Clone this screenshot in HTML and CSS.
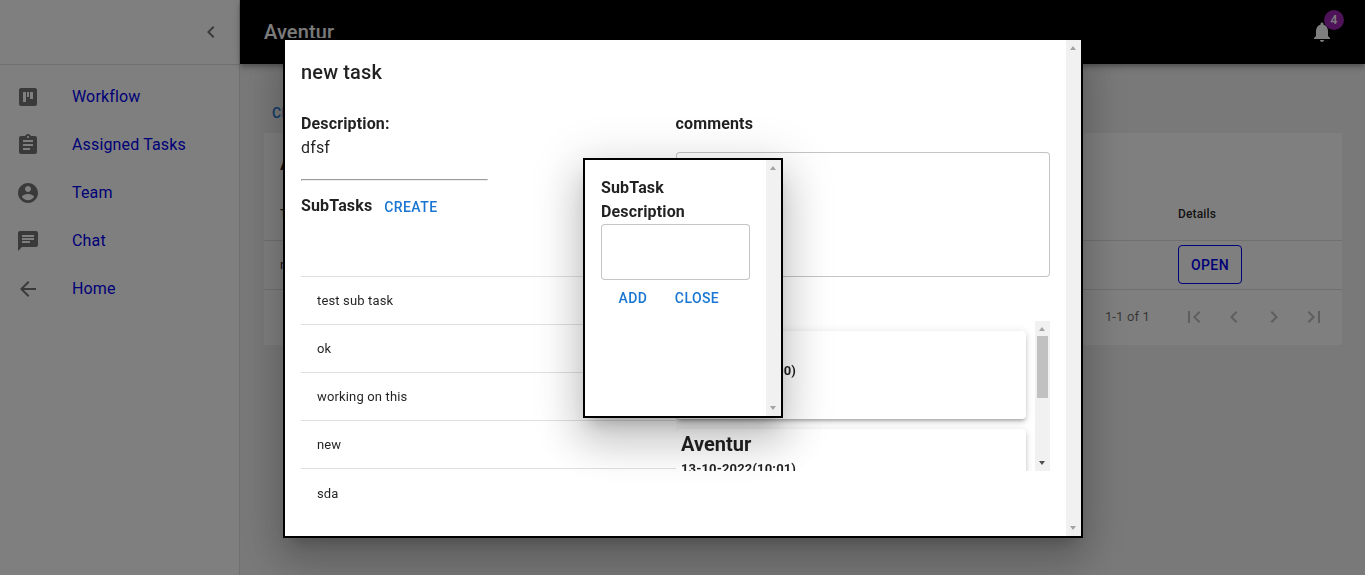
FILE: index.html
```html
<!DOCTYPE html>
<html lang="en">
<head>
    <meta charset="UTF-8">
    <meta name="viewport" content="width=device-width, initial-scale=1.0">
    <title>Aventur</title>
    <link rel="stylesheet" href="styles.css">
</head>
<body>

    <aside class="sidebar">
        <div class="sidebar-head">
            <svg class="icon" viewBox="0 0 24 24"><path d="M15.41 7.41L14 6l-6 6 6 6 1.41-1.41L10.83 12z"/></svg>
        </div>
        <nav class="nav">
            <a class="nav-item" href="#">
                <svg class="icon" viewBox="0 0 24 24"><path d="M19 3H5c-1.100 0-2 .900-2 2v14c0 1.100.900 2 2 2h14c1.100 0 2-.900 2-2V5c0-1.100-.900-2-2-2zM10 17H7V7h3v10zm3-5h-2V7h2v5zm4 2h-3V7h3v7z"/></svg>
                <span>Workflow</span>
            </a>
            <a class="nav-item" href="#">
                <svg class="icon" viewBox="0 0 24 24"><path d="M19 3h-4.180C14.400 1.840 13.300 1 12 1c-1.300 0-2.400.840-2.820 2H5c-1.100 0-2 .900-2 2v14c0 1.100.900 2 2 2h14c1.100 0 2-.900 2-2V5c0-1.100-.900-2-2-2zm-7 0c.550 0 1 .450 1 1s-.450 1-1 1-1-.450-1-1 .450-1 1-1zm2 14H7v-2h7v2zm3-4H7v-2h10v2zm0-4H7V7h10v2z"/></svg>
                <span>Assigned Tasks</span>
            </a>
            <a class="nav-item" href="#">
                <svg class="icon" viewBox="0 0 24 24"><path d="M12 2C6.480 2 2 6.480 2 12s4.480 10 10 10 10-4.480 10-10S17.520 2 12 2zm0 3c1.660 0 3 1.340 3 3s-1.340 3-3 3-3-1.340-3-3 1.340-3 3-3zm0 14.200c-2.500 0-4.710-1.280-6-3.220.030-1.990 4-3.080 6-3.080 1.990 0 5.970 1.090 6 3.080-1.290 1.940-3.500 3.220-6 3.220z"/></svg>
                <span>Team</span>
            </a>
            <a class="nav-item" href="#">
                <svg class="icon" viewBox="0 0 24 24"><path d="M20 2H4c-1.100 0-1.990.900-1.990 2L2 22l4-4h14c1.100 0 2-.900 2-2V4c0-1.100-.900-2-2-2zM6 9h12v2H6V9zm8 5H6v-2h8v2zm4-6H6V6h12v2z"/></svg>
                <span>Chat</span>
            </a>
            <a class="nav-item" href="#">
                <svg class="icon" viewBox="0 0 24 24"><path d="M20 11H7.830l5.590-5.590L12 4l-8 8 8 8 1.410-1.410L7.830 13H20v-2z"/></svg>
                <span>Home</span>
            </a>
        </nav>
    </aside>

    <div class="page">
        <header class="appbar">
            <div class="brand">Aventur</div>
            <div class="bell">
                <svg class="bell-icon" viewBox="0 0 24 24"><path d="M12 22c1.100 0 2-.900 2-2h-4c0 1.100.890 2 2 2zm6-6v-5c0-3.070-1.640-5.640-4.500-6.320V4c0-.830-.670-1.500-1.500-1.500s-1.500.670-1.500 1.500v.680C7.630 5.360 6 7.920 6 11v5l-2 2v1h16v-1l-2-2z"/></svg>
                <span class="badge">4</span>
            </div>
        </header>

        <main class="content">
            <button class="text-btn page-btn">Create</button>
            <section class="paper">
                <h3 class="paper-title">Assigned Tasks</h3>
                <div class="table-row table-head">
                    <div>Title</div>
                    <div>Details</div>
                </div>
                <div class="table-row table-body">
                    <div>new task</div>
                    <div><button class="open-btn">Open</button></div>
                </div>
                <div class="pagination">
                    <span class="page-count">1-1 of 1</span>
                    <span class="page-arrow"><svg viewBox="0 0 24 24"><path d="M18.410 16.590L13.820 12l4.590-4.590L17 6l-6 6 6 6zM6 6h2v12H6z"/></svg></span>
                    <span class="page-arrow"><svg viewBox="0 0 24 24"><path d="M15.410 16.590L10.830 12l4.580-4.590L14 6l-6 6 6 6z"/></svg></span>
                    <span class="page-arrow"><svg viewBox="0 0 24 24"><path d="M8.590 16.590L13.170 12 8.590 7.410 10 6l6 6-6 6z"/></svg></span>
                    <span class="page-arrow"><svg viewBox="0 0 24 24"><path d="M5.590 7.410L10.180 12l-4.590 4.590L7 18l6-6-6-6zM16 6h2v12h-2z"/></svg></span>
                </div>
            </section>
        </main>
    </div>

    <div class="backdrop"></div>

    <div class="modal task-modal">
        <h2 class="modal-title">new task</h2>
        <div class="task-columns">
            <div class="task-left">
                <div class="label">Description:</div>
                <div class="desc">dfsf</div>
                <hr class="divider">
                <div class="subtasks-head">
                    <span class="label">SubTasks</span>
                    <button class="text-btn">Create</button>
                </div>
                <ul class="subtasks">
                    <li>test sub task</li>
                    <li>ok</li>
                    <li>working on this</li>
                    <li>new</li>
                    <li>sda</li>
                </ul>
            </div>
            <div class="task-right">
                <div class="label">comments</div>
                <textarea class="field comment-field"></textarea>
                <div class="chat-box">
                    <div class="chat-list">
                        <div class="chat-card">
                            <div class="chat-name">Aventur</div>
                            <div class="chat-date">13-10-2022(10:00)</div>
                            <div class="chat-text">hello</div>
                        </div>
                        <div class="chat-card">
                            <div class="chat-name">Aventur</div>
                            <div class="chat-date">13-10-2022(10:01)</div>
                            <div class="chat-text">ok</div>
                        </div>
                        <div class="chat-card">
                            <div class="chat-name">Aventur</div>
                            <div class="chat-date">13-10-2022(10:02)</div>
                            <div class="chat-text">done</div>
                        </div>
                    </div>
                    <div class="scrollbar">
                        <span class="arrow-up"></span>
                        <span class="thumb"></span>
                        <span class="arrow-down active"></span>
                    </div>
                </div>
            </div>
        </div>
        <div class="scrollbar">
            <span class="arrow-up"></span>
            <span class="arrow-down"></span>
        </div>
    </div>

    <div class="modal sub-modal">
        <div class="label">SubTask</div>
        <div class="label">Description</div>
        <textarea class="field sub-field"></textarea>
        <div class="sub-actions">
            <button class="text-btn">Add</button>
            <button class="text-btn">Close</button>
        </div>
        <div class="scrollbar">
            <span class="arrow-up"></span>
            <span class="arrow-down"></span>
        </div>
    </div>

</body>
</html>
```

FILE: styles.css
```css
* {
    box-sizing: border-box;
}
html, body {
    height: 100%;
}
body {
    margin: 0;
    display: flex;
    overflow: hidden;
    font-family: Roboto, "Liberation Sans", sans-serif;
    letter-spacing: 0.15px;
    color: rgba(0, 0, 0, 0.87);
    background-color: #f2f2f2;
}
button {
    font-family: inherit;
}

/* sidebar */
.sidebar {
    width: 240px;
    flex-shrink: 0;
    background: #fff;
    border-right: 1px solid rgba(0, 0, 0, 0.12);
}
.sidebar-head {
    height: 65px;
    display: flex;
    align-items: center;
    justify-content: flex-end;
    padding-right: 16px;
    padding-bottom: 1px;
    border-bottom: 1px solid rgba(0, 0, 0, 0.12);
}
.icon {
    width: 24px;
    height: 24px;
    fill: rgba(0, 0, 0, 0.54);
    flex-shrink: 0;
}
.nav {
    padding-top: 7px;
}
.nav-item {
    display: flex;
    align-items: center;
    height: 48px;
    padding-left: 16px;
    font-size: 16px;
    color: #0000ee;
    text-decoration: none;
}
.nav-item .icon {
    margin-top: 2px;
}
.nav-item span {
    margin-left: 32px;
}

/* top bar and page behind the dialogs */
.page {
    flex: 1;
    min-width: 0;
}
.appbar {
    height: 64px;
    background: #000;
    color: #fff;
    display: flex;
    align-items: center;
    justify-content: space-between;
    padding: 0 31px 0 24px;
    box-shadow: 0 2px 4px -1px rgba(0, 0, 0, 0.2), 0 4px 5px 0 rgba(0, 0, 0, 0.14), 0 1px 10px 0 rgba(0, 0, 0, 0.12);
}
.brand {
    font-size: 20px;
    font-weight: 500;
}
.bell {
    position: relative;
    width: 24px;
    height: 24px;
}
.bell-icon {
    width: 24px;
    height: 24px;
    fill: #fff;
}
.badge {
    position: absolute;
    top: -10px;
    left: 14px;
    width: 20px;
    height: 20px;
    border-radius: 50%;
    background: #9c27b0;
    font-size: 12px;
    font-weight: 500;
    line-height: 20px;
    text-align: center;
}
.content {
    padding: 31px 23px 0 24px;
}
.page-btn {
    display: block;
    margin-bottom: 2px;
}
.paper {
    background: #fff;
    height: 212px;
}
.paper-title {
    margin: 0;
    height: 54px;
    padding: 16px 16px 0;
    font-size: 20px;
    font-weight: 500;
    line-height: 28px;
}
.table-row {
    display: grid;
    grid-template-columns: 1fr 164px;
    padding-left: 16px;
    font-size: 13px;
    border-bottom: 1px solid rgba(224, 224, 224, 1);
}
.table-head {
    height: 54px;
    padding-top: 17px;
    font-size: 12px;
    font-weight: 500;
    line-height: 20px;
}
.table-body {
    height: 49px;
    align-items: start;
    line-height: 48px;
}
.open-btn {
    display: block;
    width: 64px;
    height: 39px;
    margin-top: 4px;
    padding: 0;
    background: none;
    border: 1px solid #0000ee;
    border-radius: 4px;
    color: #0000ee;
    font-size: 14px;
    font-weight: 500;
    letter-spacing: 0.4px;
    text-transform: uppercase;
}
.pagination {
    height: 55px;
    display: flex;
    align-items: center;
    justify-content: flex-end;
    padding: 0 8px 2px 0;
}
.page-count {
    font-size: 13px;
    color: rgba(0, 0, 0, 0.6);
    margin-right: 24px;
}
.page-arrow {
    width: 40px;
    height: 24px;
    display: flex;
    justify-content: center;
}
.page-arrow svg {
    width: 24px;
    height: 24px;
    fill: rgba(0, 0, 0, 0.26);
}

.backdrop {
    position: fixed;
    inset: 0;
    background: rgba(0, 0, 0, 0.5);
}

/* dialogs */
.modal {
    position: fixed;
    background: #fff;
    border: 2px solid #000;
    overflow: hidden;
    box-shadow: 0 11px 15px -7px rgba(0, 0, 0, 0.2), 0 24px 38px 3px rgba(0, 0, 0, 0.14), 0 9px 46px 8px rgba(0, 0, 0, 0.12);
}
.task-modal {
    left: 283px;
    top: 38px;
    width: 800px;
    height: 500px;
    padding: 16px 31px 16px 16px;
}
.sub-modal {
    left: 583px;
    top: 158px;
    width: 200px;
    height: 260px;
    padding: 16px 31px 0 16px;
}
.modal-title {
    margin: 0 0 23px;
    font-size: 20px;
    font-weight: 500;
    line-height: 32px;
}
.task-columns {
    display: grid;
    grid-template-columns: 375px 374px;
}
.label {
    font-size: 16px;
    font-weight: 700;
    line-height: 24px;
}
.task-left > .label,
.task-right > .label {
    padding-top: 1px;
}
.task-right > .label {
    margin-left: -0.5px;
}
.desc {
    font-size: 16px;
    line-height: 24px;
}
.divider {
    width: 187px;
    margin: 19px 0 0;
}
.subtasks-head {
    display: flex;
    align-items: flex-start;
    margin-top: 8px;
}
.subtasks-head .label {
    margin-top: 5px;
}
.text-btn {
    min-width: 64px;
    height: 36px;
    padding: 6px 8px;
    background: none;
    border: 0;
    color: #1976d2;
    font-size: 14px;
    font-weight: 500;
    line-height: 24px;
    letter-spacing: 0.4px;
    text-transform: uppercase;
}
.subtasks-head .text-btn {
    margin-left: 4px;
}
.subtasks {
    list-style: none;
    margin: 51px 0 0;
    padding: 0;
}
.subtasks li {
    height: 48px;
    padding-left: 16px;
    border-top: 1px solid rgba(0, 0, 0, 0.12);
    font-size: 13px;
    line-height: 47px;
}
.subtasks li:last-child {
    line-height: 49px;
}
.field {
    display: block;
    background: #fff;
    border: 1px solid rgba(0, 0, 0, 0.23);
    border-radius: 4px;
    resize: none;
    outline: 0;
}
.comment-field {
    width: 374px;
    height: 125px;
    margin-top: 16px;
}
.sub-field {
    width: 149px;
    height: 56px;
}
.sub-actions {
    display: flex;
}
.chat-box {
    position: relative;
    height: 150px;
    margin-top: 44px;
}
.chat-list {
    height: 100%;
    padding-top: 10px;
    overflow: hidden;
}
.chat-card {
    width: 350px;
    height: 88px;
    margin-bottom: 10px;
    padding-left: 5px;
    background: #fff;
    border-radius: 4px;
    box-shadow: 0 3px 3px -2px rgba(0, 0, 0, 0.2), 0 3px 4px 0 rgba(0, 0, 0, 0.14), 0 1px 8px 0 rgba(0, 0, 0, 0.12);
}
.chat-name {
    font-size: 20px;
    font-weight: 700;
    line-height: 30px;
    letter-spacing: 0;
}
.chat-date {
    font-size: 13px;
    font-weight: 700;
    line-height: 20px;
}
.chat-text {
    font-size: 14px;
    line-height: 24px;
}

/* classic scrollbars, drawn over the right edge of each box */
.scrollbar {
    position: absolute;
    top: 0;
    right: 0;
    bottom: 0;
    width: 15px;
    background: #f1f1f1;
}
.arrow-up,
.arrow-down {
    position: absolute;
    left: 4px;
    width: 0;
    height: 0;
    border-left: 3.5px solid transparent;
    border-right: 3.5px solid transparent;
}
.arrow-up {
    top: 6px;
    border-bottom: 4px solid #a3a3a3;
}
.arrow-down {
    bottom: 6px;
    border-top: 4px solid #a3a3a3;
}
.arrow-down.active {
    border-top-color: #505050;
}
.thumb {
    position: absolute;
    top: 15px;
    left: 2px;
    width: 11px;
    height: 62px;
    background: #c1c1c1;
}
```
